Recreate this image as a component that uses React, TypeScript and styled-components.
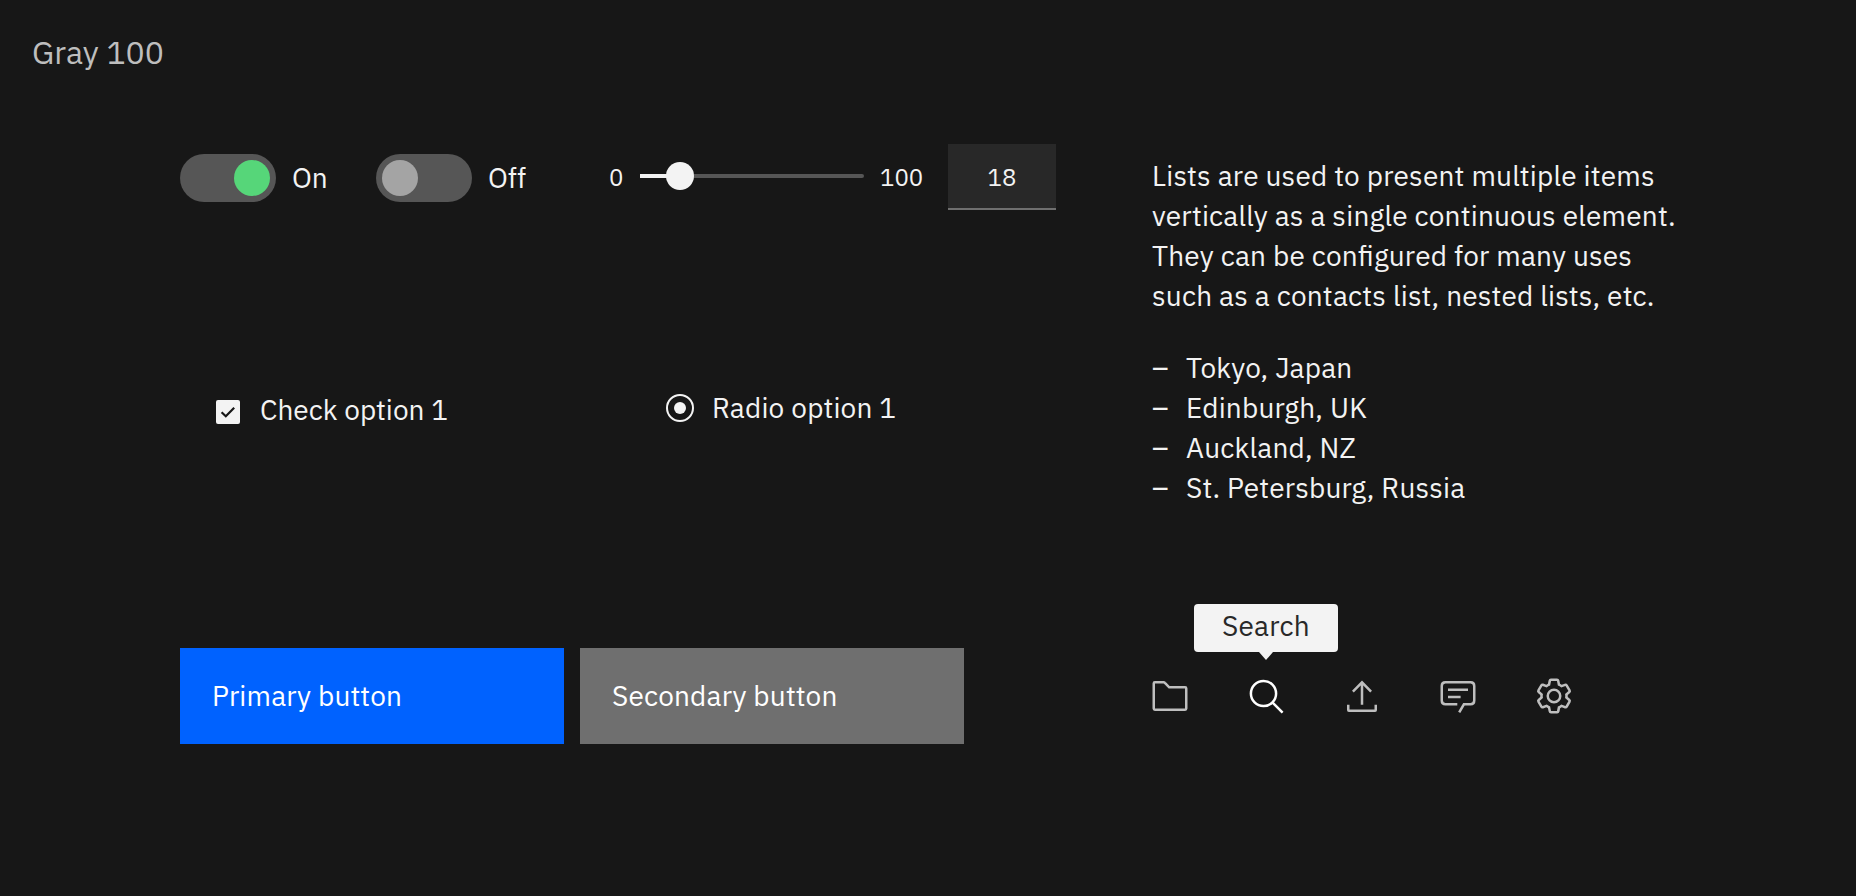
import React from "react";
import styled, { createGlobalStyle } from "styled-components";

const color = {
  background: "#171717",
  field: "#282828",
  track: "#565656",
  knobOff: "#a4a4a4",
  knobOn: "#56d679",
  interactive: "#0062ff",
  secondary: "#6f6f6f",
  textPrimary: "#f3f3f3",
  textSecondary: "#bebebe",
};

const GlobalStyle = createGlobalStyle`
  *, *::before, *::after { box-sizing: border-box; }
  body {
    margin: 0;
    background: ${color.background};
    color: ${color.textPrimary};
    font-family: "IBM Plex Sans", "Open Sans", "Noto Sans", sans-serif;
    font-size: 28px;
    font-weight: 400;
    line-height: 40px;
    font-feature-settings: "liga" 1;
  }
`;

const Page = styled.main`
  height: 896px;
  padding: 32px 0 0 32px;
  overflow: hidden;
`;

const Title = styled.h1`
  height: 40px;
  margin: 0;
  color: ${color.textSecondary};
  font-size: 32px;
  font-weight: inherit;
`;

const Columns = styled.div`
  display: flex;
  gap: 96px;
  padding: 72px 0 0 148px;
`;

const Controls = styled.section`
  width: 876px;
`;

const Aside = styled.section`
  width: 560px;
  padding-top: 12px;
`;

const Label = styled.span<{ $tight?: boolean; $small?: boolean }>`
  display: block;
  white-space: nowrap;
  letter-spacing: ${(p) => (p.$tight ? 0.02 : 0.19)}px;
  ${(p) => p.$small && "font-size: 24px;"}
`;

const InputRow = styled.div`
  display: flex;
  height: 66px;
`;

const ToggleField = styled.div<{ $width: number }>`
  display: flex;
  gap: 16px;
  width: ${(p) => p.$width}px;
  padding-top: 10px;
  ${Label} { padding-top: 4px; }
`;

const Toggle = styled.div<{ $on?: boolean }>`
  display: flex;
  flex: none;
  justify-content: ${(p) => (p.$on ? "flex-end" : "flex-start")};
  width: 96px;
  height: 48px;
  padding: 6px;
  border-radius: 24px;
  background: ${color.track};
  &::before {
    content: "";
    width: 36px;
    height: 36px;
    border-radius: 50%;
    background: ${(p) => (p.$on ? color.knobOn : color.knobOff)};
  }
`;

const SliderField = styled.div`
  display: flex;
  align-items: flex-start;
  ${Label} { padding-top: 13px; }
`;

const SliderMin = styled.div`
  width: 31px;
`;

const SliderMax = styled.div`
  width: 68px;
  margin-left: 16px;
`;

const Slider = styled.div`
  display: flex;
  align-items: center;
  width: 224px;
  height: 28px;
  margin-top: 18px;
`;

const Filled = styled.div`
  width: 27px;
  height: 4px;
  margin-right: -1px;
  background: ${color.textPrimary};
`;

const Thumb = styled.div`
  position: relative;
  width: 28px;
  height: 28px;
  border-radius: 50%;
  background: ${color.textPrimary};
`;

const Remaining = styled.div`
  flex: 1;
  height: 4px;
  margin-left: -1px;
  border-radius: 0 2px 2px 0;
  background: ${color.track};
`;

const NumberField = styled.div`
  display: flex;
  justify-content: center;
  width: 108px;
  height: 66px;
  border-bottom: 2px solid ${color.secondary};
  background: ${color.field};
`;

const OptionRow = styled.div`
  display: flex;
  height: 32px;
  margin: 184px 0 222px;
  padding-left: 36px;
`;

const Option = styled.div<{ $width: number; $offset: number; $gap: number }>`
  display: flex;
  gap: ${(p) => p.$gap}px;
  width: ${(p) => p.$width}px;
  ${Label} { margin-top: ${(p) => p.$offset}px; }
`;

const Checkbox = styled.div`
  display: flex;
  flex: none;
  width: 24px;
  height: 24px;
  margin-top: 6px;
  border-radius: 2px;
  background: ${color.textPrimary};
`;

const Radio = styled.div`
  display: grid;
  flex: none;
  place-items: center;
  width: 28px;
  height: 28px;
  border: 2px solid ${color.textPrimary};
  border-radius: 50%;
  &::before {
    content: "";
    width: 12px;
    height: 12px;
    border-radius: 50%;
    background: ${color.textPrimary};
  }
`;

const ButtonRow = styled.div`
  display: flex;
  gap: 16px;
`;

const Button = styled.button<{ $kind: "interactive" | "secondary" }>`
  width: 384px;
  height: 96px;
  padding: 0 32px;
  border: 0;
  background: ${(p) => color[p.$kind]};
  color: #fff;
  font: inherit;
  font-feature-settings: inherit;
  text-align: left;
`;

const Paragraph = styled.p`
  margin: 0 0 32px;
`;

const List = styled.ul`
  margin: 0;
  padding: 0;
  list-style: none;
`;

const Item = styled.li`
  display: flex;
`;

const Dash = styled.span`
  width: 34px;
`;

const IconBar = styled.div`
  display: flex;
  gap: 60px;
  margin-top: 170px;
`;

const IconButton = styled.div<{ $active?: boolean }>`
  position: relative;
  width: 36px;
  height: 36px;
  color: ${(p) => (p.$active ? "#fff" : color.textSecondary)};
  svg {
    display: block;
    overflow: visible;
  }
`;

const Tooltip = styled.div`
  position: absolute;
  top: -74px;
  left: -54px;
  display: flex;
  justify-content: center;
  width: 144px;
  height: 48px;
  padding-top: 2px;
  border-radius: 4px;
  background: ${color.textPrimary};
  color: #282828;
  &::after {
    content: "";
    position: absolute;
    top: 100%;
    border: 8px solid transparent;
    border-width: 8px 7px 0;
    border-top-color: ${color.textPrimary};
  }
`;

const Icon = ({ children }: { children: React.ReactNode }) => (
  <svg width="36" height="36" viewBox="0 0 36 36" fill="none" stroke="currentColor" strokeWidth="2.5">
    {children}
  </svg>
);

const paragraph = [
  "Lists are used to present multiple items",
  "vertically as a single continuous element.",
  "They can be configured for many uses",
  "such as a contacts list, nested lists, etc.",
];

const cities = ["Tokyo, Japan", "Edinburgh, UK", "Auckland, NZ", "St. Petersburg, Russia"];

export default function App() {
  return (
    <Page>
      <GlobalStyle />
      <Title>
        <Label $tight>Gray 100</Label>
      </Title>
      <Columns>
        <Controls>
          <InputRow>
            <ToggleField $width={196}>
              <Toggle $on />
              <Label $tight>On</Label>
            </ToggleField>
            <ToggleField $width={233}>
              <Toggle />
              <Label $tight>Off</Label>
            </ToggleField>
            <SliderField>
              <SliderMin>
                <Label $small>0</Label>
              </SliderMin>
              <Slider>
                <Filled />
                <Thumb />
                <Remaining />
              </Slider>
              <SliderMax>
                <Label $small $tight>100</Label>
              </SliderMax>
              <NumberField>
                <Label $small $tight>18</Label>
              </NumberField>
            </SliderField>
          </InputRow>
          <OptionRow>
            <Option $width={450} $gap={20} $offset={-4}>
              <Checkbox>
                <svg width="24" height="24" viewBox="0 0 24 24" fill="none" stroke={color.background} strokeWidth="2.2">
                  <path d="M5.6 12.2 9.8 16.2 18.2 7.8" />
                </svg>
              </Checkbox>
              <Label $tight>Check option 1</Label>
            </Option>
            <Option $width={300} $gap={18} $offset={-6}>
              <Radio />
              <Label>Radio option 1</Label>
            </Option>
          </OptionRow>
          <ButtonRow>
            <Button $kind="interactive">
              <Label>Primary button</Label>
            </Button>
            <Button $kind="secondary">
              <Label>Secondary button</Label>
            </Button>
          </ButtonRow>
        </Controls>
        <Aside>
          <Paragraph>
            {paragraph.map((line) => (
              <Label key={line}>{line}</Label>
            ))}
          </Paragraph>
          <List>
            {cities.map((city) => (
              <Item key={city}>
                <Dash>–</Dash>
                <Label>{city}</Label>
              </Item>
            ))}
          </List>
          <IconBar>
            <IconButton>
              <Icon>
                <path d="M1.75 5.4Q1.75 4.25 2.9 4.25H11.5Q12.3 4.25 12.9 4.9L17.2 9.3H33.1Q34.25 9.3 34.25 10.4V30.6Q34.25 31.75 33.1 31.75H2.9Q1.75 31.75 1.75 30.6Z" />
              </Icon>
            </IconButton>
            <IconButton $active>
              <Icon>
                <circle cx="15.5" cy="15.5" r="12.6" />
                <path d="M24.4 24.4 34.6 34.6" />
              </Icon>
              <Tooltip>
                <Label>Search</Label>
              </Tooltip>
            </IconButton>
            <IconButton>
              <Icon>
                <path d="M18 26.8V4.4M8.9 13.6 18 4.4 27.1 13.6M4.25 26.8V32.1Q4.25 32.75 4.9 32.75H31.1Q31.75 32.75 31.75 32.1V26.8" />
              </Icon>
            </IconButton>
            <IconButton>
              <Icon>
                <path d="M17.3 26.3H5.4Q1.75 26.3 1.75 22.6V8Q1.75 4.25 5.4 4.25H30.6Q34.25 4.25 34.25 8V22.6Q34.25 26.3 30.6 26.3H23.9L19.2 34.4M8 11.7H28M8 19.1H20.6" />
              </Icon>
            </IconButton>
            <IconButton>
              <Icon>
                <g transform="translate(-2 -2) scale(1.25)" strokeWidth="2">
                  <path
                    fill="currentColor"
                    stroke="none"
                    d="M27,16.76c0-.25,0-.5,0-.76s0-.51,0-.77l1.92-1.68A2,2,0,0,0,29.3,11L26.94,7a2,2,0,0,0-1.73-1,2,2,0,0,0-.64.1l-2.43.82a11.35,11.35,0,0,0-1.31-.75l-.51-2.52a2,2,0,0,0-2-1.61H13.64a2,2,0,0,0-2,1.61l-.51,2.52a11.48,11.48,0,0,0-1.32.75L7.43,6.06A2,2,0,0,0,6.79,6,2,2,0,0,0,5.06,7L2.7,11a2,2,0,0,0,.41,2.51L5,15.24c0,.25,0,.5,0,.76s0,.51,0,.77L3.11,18.45A2,2,0,0,0,2.7,21L5.06,25a2,2,0,0,0,1.73,1,2,2,0,0,0,.64-.1l2.43-.82a11.35,11.35,0,0,0,1.31.75l.51,2.52a2,2,0,0,0,2,1.61h4.72a2,2,0,0,0,2-1.61l.51-2.52a11.48,11.48,0,0,0,1.32-.75l2.42.82a2,2,0,0,0,.64.1,2,2,0,0,0,1.73-1L29.3,21a2,2,0,0,0-.41-2.51ZM25.21,24l-3.43-1.16a8.86,8.86,0,0,1-2.71,1.57L18.36,28H13.64l-.71-3.55a9.36,9.36,0,0,1-2.7-1.57L6.79,24,4.43,20l2.72-2.4a8.9,8.9,0,0,1,0-3.13L4.43,12,6.79,8l3.43,1.16a8.86,8.86,0,0,1,2.71-1.57L13.64,4h4.72l.71,3.55a9.36,9.36,0,0,1,2.7,1.57L25.21,8,27.57,12l-2.72,2.4a8.9,8.9,0,0,1,0,3.13L27.57,20Z"
                  />
                  <circle cx="16" cy="16" r="5" />
                </g>
              </Icon>
            </IconButton>
          </IconBar>
        </Aside>
      </Columns>
    </Page>
  );
}
